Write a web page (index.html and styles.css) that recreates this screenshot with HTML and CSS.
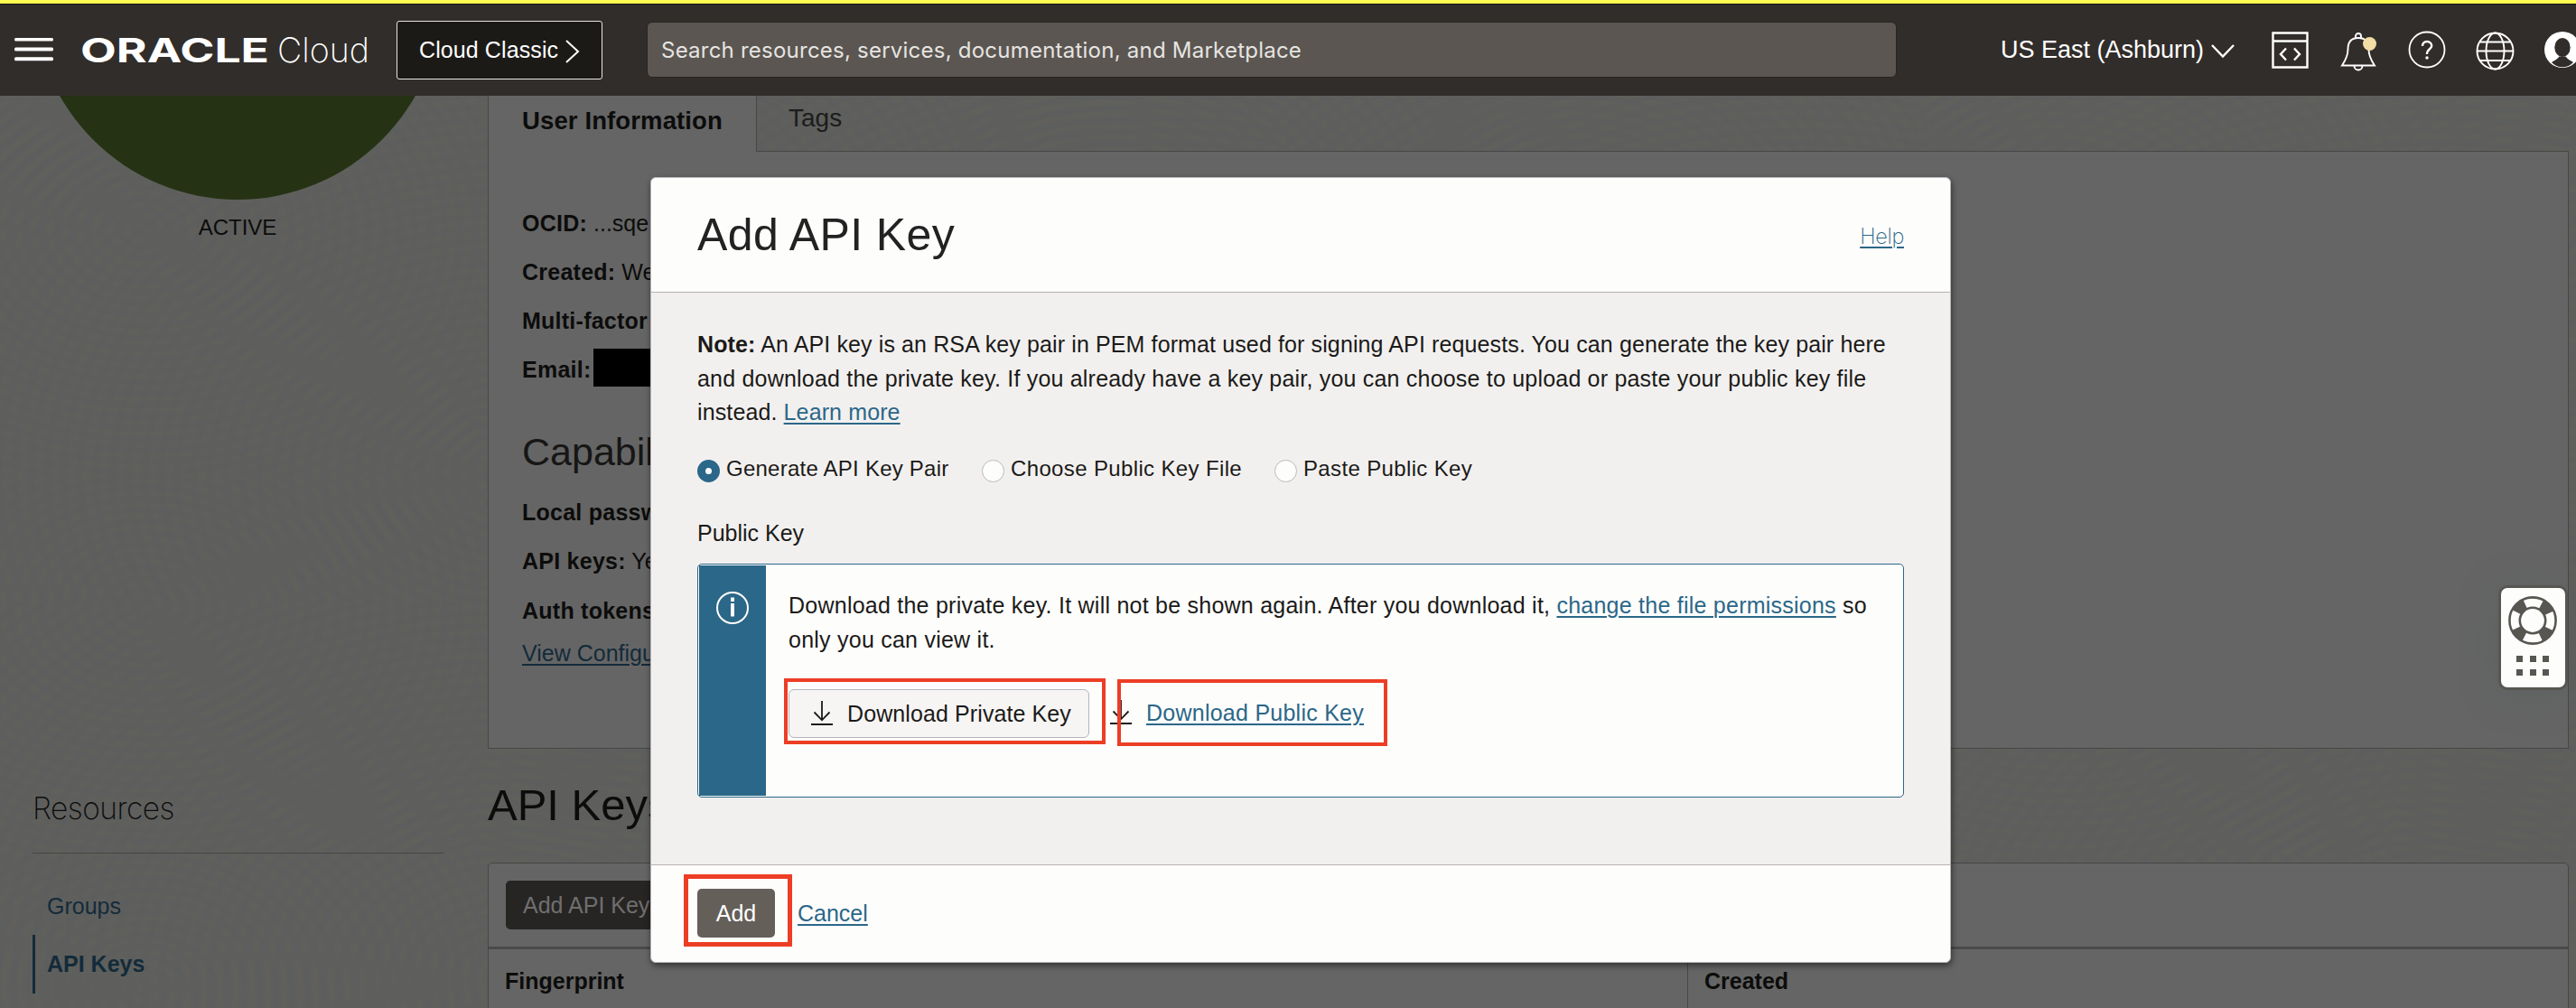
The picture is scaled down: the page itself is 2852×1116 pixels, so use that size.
FILE: index.html
```
<!DOCTYPE html>
<html lang="en">
<head>
<meta charset="utf-8">
<title>Oracle Cloud</title>
<link rel="stylesheet" href="styles.css">
</head>
<body>
<header class="topbar">
  <svg class="menu" width="43" height="26" viewBox="0 0 43 26"><g fill="#fff"><rect width="43" height="3.6" rx="1.5"/><rect y="10.4" width="43" height="4" rx="1.5"/><rect y="21.2" width="43" height="4" rx="1.5"/></g></svg>
  <svg class="logo" width="320" height="44" viewBox="0 0 320 44" fill="#fff">
    <text class="logo-brand" x="-1" y="36" textLength="209" lengthAdjust="spacingAndGlyphs">ORACLE</text>
    <text class="logo-product" x="217" y="36" textLength="102" lengthAdjust="spacingAndGlyphs">Cloud</text>
  </svg>
  <a class="classic">Cloud Classic<svg width="16" height="26" viewBox="0 0 16 26" fill="none" stroke="#fff" stroke-width="2"><path d="M1 1l13 12L1 25"/></svg></a>
  <div class="search">Search resources, services, documentation, and Marketplace</div>
  <div class="region">US East (Ashburn)<svg width="26" height="18" viewBox="0 0 26 18" fill="none" stroke="#fff" stroke-width="2.4"><path d="M1 2l12 12.500L25 2"/></svg></div>
  <div class="tools">
    <svg class="tool-dev" width="41" height="41" viewBox="0 0 41 41" fill="none" stroke="#fff"><path stroke-width="2.400" d="M1.500 1.500h38v38h-38zM1.500 10.500h38"/><path stroke-width="2.400" d="M16 18.500l-6 6.500 6 6.500M25 18.500l6 6.500-6 6.500"/></svg>
    <svg class="tool-bell" width="42" height="44" viewBox="0 0 42 44" fill="none" stroke="#fff" stroke-width="1.900"><path d="M2 37.500h36c-4-6-6.500-11-6.500-18C31.500 11 27 7 20 7S8.500 11 8.500 19.500C8.500 27 6 31.500 2 37.500zM17 7V5a3 3 0 0 1 6 0v2M15.500 38a4.500 4.500 0 0 0 9 0"/><circle cx="32.500" cy="13.500" r="7.500" fill="#f2dda4" stroke="none"/></svg>
    <svg class="tool-help" width="42" height="42" viewBox="0 0 42 42" fill="none" stroke="#fff" stroke-width="1.800"><circle cx="21" cy="21" r="19.500"/><path stroke-width="2.400" d="M16 17c0-3 2-5 5-5s5.200 2 5.200 4.700c0 3.500-5.200 4.200-5.200 8.300v1"/><circle cx="21" cy="30" r="1.700" fill="#fff" stroke="none"/></svg>
    <svg class="tool-globe" width="43" height="43" viewBox="0 0 43 43" fill="none" stroke="#fff" stroke-width="1.900"><circle cx="21.500" cy="21.500" r="20"/><ellipse cx="21.500" cy="21.500" rx="10" ry="20"/><path d="M1.500 21.500h40M4.500 11.500h34M4.500 32h34"/></svg>
    <svg class="tool-user" width="42" height="42" viewBox="0 0 42 42"><circle cx="21" cy="21" r="20" fill="#fff"/><ellipse cx="21" cy="18.500" rx="8.700" ry="10.500" fill="#312d2a"/><path d="M9 35c3-2 6.500-3.500 8.500-6.500h7c2 3 5.500 4.500 8.500 6.500-6 7-18 7-24 0z" fill="#312d2a"/></svg>
  </div>
</header>

<main class="page">
  <aside class="sidebar">
    <div class="avatar-clip"><div class="avatar"></div></div>
    <div class="status">ACTIVE</div>
    <h3 class="side-title">Resources</h3>
    <nav class="side-nav">
      <a>Groups</a>
      <a class="current">API Keys</a>
    </nav>
  </aside>

  <section class="content">
    <div class="tabs">
      <div class="tab tab-active">User Information</div>
      <div class="tab tab-idle">Tags</div>
    </div>
    <div class="panel">
      <div class="row"><b>OCID:</b> ...sqe</div>
      <div class="row"><b>Created:</b> Wed</div>
      <div class="row"><b>Multi-factor</b></div>
      <div class="row"><b>Email:</b><span class="redacted"></span></div>
      <h2 class="panel-title">Capabilities</h2>
      <div class="row"><b>Local password:</b></div>
      <div class="row"><b>API keys:</b> Yes</div>
      <div class="row"><b>Auth tokens:</b></div>
      <a class="panel-link">View Configuration</a>
    </div>
    <h1 class="section-title">API Keys</h1>
    <div class="table">
      <div class="table-bar"><div class="dim-button">Add API Key</div></div>
      <div class="table-head"><div>Fingerprint</div><div>Created</div></div>
    </div>
  </section>
</main>

<div class="support">
  <svg width="54" height="54" viewBox="0 0 54 54" fill="none" stroke="#585651"><circle cx="27" cy="27" r="20" stroke-width="11" stroke-dasharray="13 18.416" stroke-dashoffset="-9.208"/><circle cx="27" cy="27" r="25.600" stroke-width="2.600"/><circle cx="27" cy="27" r="14.200" stroke-width="2.600"/></svg>
  <div class="dots"><i></i><i></i><i></i><i></i><i></i><i></i></div>
</div>

<div class="modal">
  <div class="modal-head"><h2>Add API Key</h2><a class="help">Help</a></div>
  <div class="modal-body">
    <p class="note"><b>Note:</b> An API key is an RSA key pair in PEM format used for signing API requests. You can generate the key pair here<br><span class="loose">and download the private key. If you already have a key pair, you can choose to upload or paste your public key file</span><br>instead. <a>Learn more</a></p>
    <div class="radios">
      <label class="r-generate"><span class="radio on"></span>Generate API Key Pair</label>
      <label class="r-choose"><span class="radio"></span>Choose Public Key File</label>
      <label><span class="radio"></span>Paste Public Key</label>
    </div>
    <div class="field-label">Public Key</div>
    <div class="info">
      <div class="info-side"><svg width="38" height="38" viewBox="0 0 38 38"><circle cx="19" cy="19" r="17" fill="none" stroke="#fff" stroke-width="2"/><path d="M17 7.500h4v4.500h-4zM17 14h4v14.500h-4z" fill="#fff"/></svg></div>
      <div class="info-main">
        <p>Download the private key. It will not be shown again. After you download it, <a>change the file permissions</a> so<br>only you can view it.</p>
        <div class="downloads">
          <div class="download-button"><svg width="25" height="30" viewBox="0 0 25 30" fill="none" stroke="#1b1a18" stroke-width="1.800"><path d="M12 1v21M3.500 13.500L12 22.300l8.500-8.800M0 27h24"/></svg>Download Private Key</div>
          <div class="download-link"><svg width="25" height="30" viewBox="0 0 25 30" fill="none" stroke="#1b1a18" stroke-width="1.800"><path d="M12 1v21M3.500 13.500L12 22.300l8.500-8.800M0 27h24"/></svg><a>Download Public Key</a></div>
        </div>
      </div>
    </div>
  </div>
  <div class="modal-foot"><div class="add">Add</div><a>Cancel</a></div>
  <div class="mark mark-private"></div>
  <div class="mark mark-public"></div>
  <div class="mark mark-add"></div>
</div>
</body>
</html>
```
FILE: styles.css
```
* { box-sizing: border-box; }
body {
  margin: 0;
  height: 1116px;
  overflow: hidden;
  position: relative;
  font: 25px/40px "Liberation Sans", Arial, sans-serif;
  color: #0c0c0b;
  background: #5f5f5d;
}
h1, h2, h3, p { margin: 0; font-weight: 400; }
svg { display: block; flex: none; }

/* Top bar */
.topbar {
  height: 106px;
  overflow: hidden;
  display: flex;
  align-items: center;
  padding-left: 16px;
  background: #312d2a;
  border-top: 4px solid #fefb52;
  box-shadow: inset 0 1px #161410;
  color: #fff;
}
.menu { margin-right: 31px; }
.logo { margin-right: 29px; }
.logo-brand { font: 700 37.500px Inter, sans-serif; }
.logo-product { font: 200 38px Inter, sans-serif; }
.classic {
  width: 228px;
  height: 65px;
  flex: none;
  display: flex;
  align-items: center;
  gap: 8px;
  padding: 0 0 0 24px;
  margin-right: 49px;
  border: 1px solid #e8e6e2;
  border-radius: 3px;
  background: #1c1a17;
  letter-spacing: .1px;
}
.classic svg { margin-top: 3px; }
.search {
  width: 1384px;
  height: 62px;
  flex: none;
  padding-left: 15px;
  border: 1px solid #282421;
  border-radius: 6px;
  background: #5b5651;
  color: #e6e4e1;
  font: 24px/62px Inter, sans-serif;
  letter-spacing: .23px;
}
.region {
  margin-left: 115px;
  font-size: 27px;
  display: flex;
  align-items: center;
  gap: 8px;
  width: 300px;
  flex: none;
}
.region svg { margin-top: 4px; }
.tools { display: flex; align-items: center; height: 100px; }
.tool-dev { margin-right: 35px; }
.tool-bell { margin: 3px 33px 0 0; }
.tool-help { margin-right: 33px; }
.tool-globe { margin: 2px 32px 0 0; }

/* Page behind the dialog */
.page {
  display: flex;
  height: 1010px;
  overflow: hidden;
  background:
    repeating-radial-gradient(ellipse at 30% 35%, rgba(96, 96, 90, .25) 0 5px, rgba(85, 90, 96, .16) 9px 13px, rgba(96, 96, 90, .25) 17px) 0 0 / 530px 420px,
    repeating-radial-gradient(ellipse at 80% 75%, rgba(98, 97, 90, .25) 0 5px, rgba(85, 90, 95, .16) 10px 13px, rgba(98, 97, 90, .25) 18px) 0 0 / 710px 560px,
    #5f5f5d;
}
.sidebar { width: 540px; flex: none; }
.avatar-clip { height: 115px; overflow: hidden; display: flow-root; }
.avatar { width: 452px; height: 452px; margin: -337px 0 0 37px; border-radius: 50%; background: #253214; }
.status { margin-top: 11px; width: 526px; text-align: center; font-size: 24px; }
.side-title {
  margin: 603px 49px 0 36px;
  padding-bottom: 29px;
  border-bottom: 1px solid #464644;
  font: 150 33.500px/40px Inter, sans-serif;
  letter-spacing: -.5px;
}
.side-nav { margin: 26px 0 0 36px; }
.side-nav a {
  display: block;
  height: 65px;
  line-height: 65px;
  padding-left: 13px;
  border-left: 3px solid transparent;
  color: #132b3a;
}
.side-nav a:first-child { height: 64px; }
.side-nav .current { font-weight: 700; border-left-color: #132b3a; }

.content { width: 2304px; flex: none; }
.tabs { display: flex; height: 62px; }
.tab-active {
  width: 297px;
  padding-left: 37px;
  background: #656565;
  border-left: 1px solid #464646;
  font: 700 27.500px/55px "Liberation Sans", sans-serif;
  letter-spacing: .12px;
}
.tab-idle {
  flex: 1;
  padding-left: 35px;
  border-left: 1px solid #464646;
  border-bottom: 1px solid #464646;
  font-size: 28px;
  line-height: 49px;
  color: #1c1c1b;
}
.panel {
  height: 661px;
  padding: 52px 0 0 37px;
  background: #656565;
  border: 1px solid #464646;
  border-top: 0;
}
.row { height: 54.100px; line-height: 54.100px; white-space: nowrap; }
.row b { letter-spacing: .25px; }
.redacted {
  display: inline-block;
  width: 150px;
  height: 42px;
  margin-left: 2px;
  vertical-align: -10px;
  line-height: 1;
  background: #000;
}
.panel-title { margin: 34px 0 10px; font-size: 43px; line-height: 60px; color: #161615; }
.panel-link { display: block; color: #132b3a; text-decoration: underline; text-decoration-thickness: 2px; text-underline-offset: 3px; }
.section-title { margin-top: 32px; font-size: 49px; line-height: 60px; }
.table {
  margin-top: 34px;
  height: 200px;
  border: 1px solid #464646;
  border-radius: 5px;
  background: #656565;
}
.table-bar { height: 95px; padding: 19px; border-bottom: 3px solid #4a4a4a; }
.dim-button {
  width: 180px;
  height: 54px;
  padding-left: 19px;
  border-radius: 5px;
  background: #272523;
  color: #6f6f6f;
  line-height: 54px;
}
.table-head { display: flex; height: 104px; font-weight: 700; line-height: 71px; }
.table-head div { padding-left: 18px; }
.table-head div:first-child { width: 1327px; }
.table-head div + div { border-left: 1px solid #464646; }

/* Floating support widget */
.support {
  position: absolute;
  left: 2766px;
  top: 648px;
  width: 77px;
  height: 116px;
  padding: 9px 0 0 8px;
  border: 3px solid #585651;
  border-radius: 10px;
  background: #fdfdfc;
  box-shadow: 0 6px 40px rgba(85, 95, 95, .4);
}
.dots { display: grid; grid-template-columns: repeat(3, 7px); gap: 7.500px; margin: 12px 0 0 9px; }
.dots i { height: 7px; background: #585651; }

/* Dialog */
.modal {
  position: absolute;
  left: 720px;
  top: 196px;
  width: 1440px;
  height: 870px;
  border: 1px solid #b4b4b8;
  border-radius: 6px;
  background: #fdfdfc;
  box-shadow: 1px 3px 7px rgba(0, 0, 0, .5);
  color: #1b1a18;
}
.modal a { color: #2b6788; text-decoration: underline; text-decoration-thickness: 2px; text-underline-offset: 3px; }
.modal-head {
  height: 127px;
  padding: 0 51px;
  display: flex;
  justify-content: space-between;
  border-bottom: 1px solid #b8b2ae;
  line-height: 127px;
}
.modal-head h2 { font-size: 50px; letter-spacing: .4px; color: #222; }
.modal-head .help { padding-top: 1px; font-family: Inter, sans-serif; font-weight: 150; font-size: 23.500px; letter-spacing: -.3px; }
.modal-body { height: 634px; padding: 39px 51px 0; background: #f2f0ef; border-bottom: 1px solid #b8b2ae; }
.note { line-height: 37.500px; white-space: nowrap; letter-spacing: .12px; }
.note .loose { letter-spacing: .2px; }
.radios { display: flex; margin-top: 23px; font-size: 24px; letter-spacing: .36px; }
.radios label { display: flex; gap: 7px; }
.radios .r-generate { width: 315px; letter-spacing: .24px; }
.r-choose { width: 324px; }
.radio { width: 25px; height: 25px; margin-top: 10px; border: 1px solid #b9b9bf; border-radius: 50%; background: #fdfdfc; }
.radio.on { border: 9px solid #2b6788; }
.field-label { margin-top: 31px; }
.info {
  margin-top: 14px;
  height: 259px;
  padding: 1px;
  display: flex;
  border: 1px solid #2b6788;
  border-radius: 5px;
  background: #fdfdfc;
}
.info-side { width: 74px; padding: 28px 0 0 18px; background: #2b6788; }
.info-main { padding: 25px 0 0 25px; }
.info-main p { line-height: 38px; white-space: nowrap; letter-spacing: .24px; }
.downloads { display: flex; gap: 23px; margin-top: 36px; }
.download-button {
  width: 333px;
  height: 54px;
  display: flex;
  align-items: center;
  gap: 15px;
  padding-left: 24px;
  border: 1px solid #b4b4bc;
  border-radius: 6px;
  background: #f7f5f4;
  letter-spacing: .1px;
}
.download-link { height: 54px; display: flex; align-items: center; gap: 15px; letter-spacing: .25px; }
.download-link a, .download-link svg { position: relative; top: -1px; }
.modal-foot { display: flex; gap: 25px; padding: 26px 51px 0; line-height: 54px; }
.add { width: 86px; height: 54px; border-radius: 5px; background: #655f5a; color: #fff; text-align: center; }

/* Red call-out frames */
.mark { position: absolute; border: 4px solid #ec3e25; }
.mark-private { left: 147px; top: 554px; width: 356px; height: 73px; }
.mark-public { left: 516px; top: 555px; width: 299px; height: 74px; }
.mark-add { left: 36px; top: 771px; width: 120px; height: 80px; border-width: 5px; }
```
